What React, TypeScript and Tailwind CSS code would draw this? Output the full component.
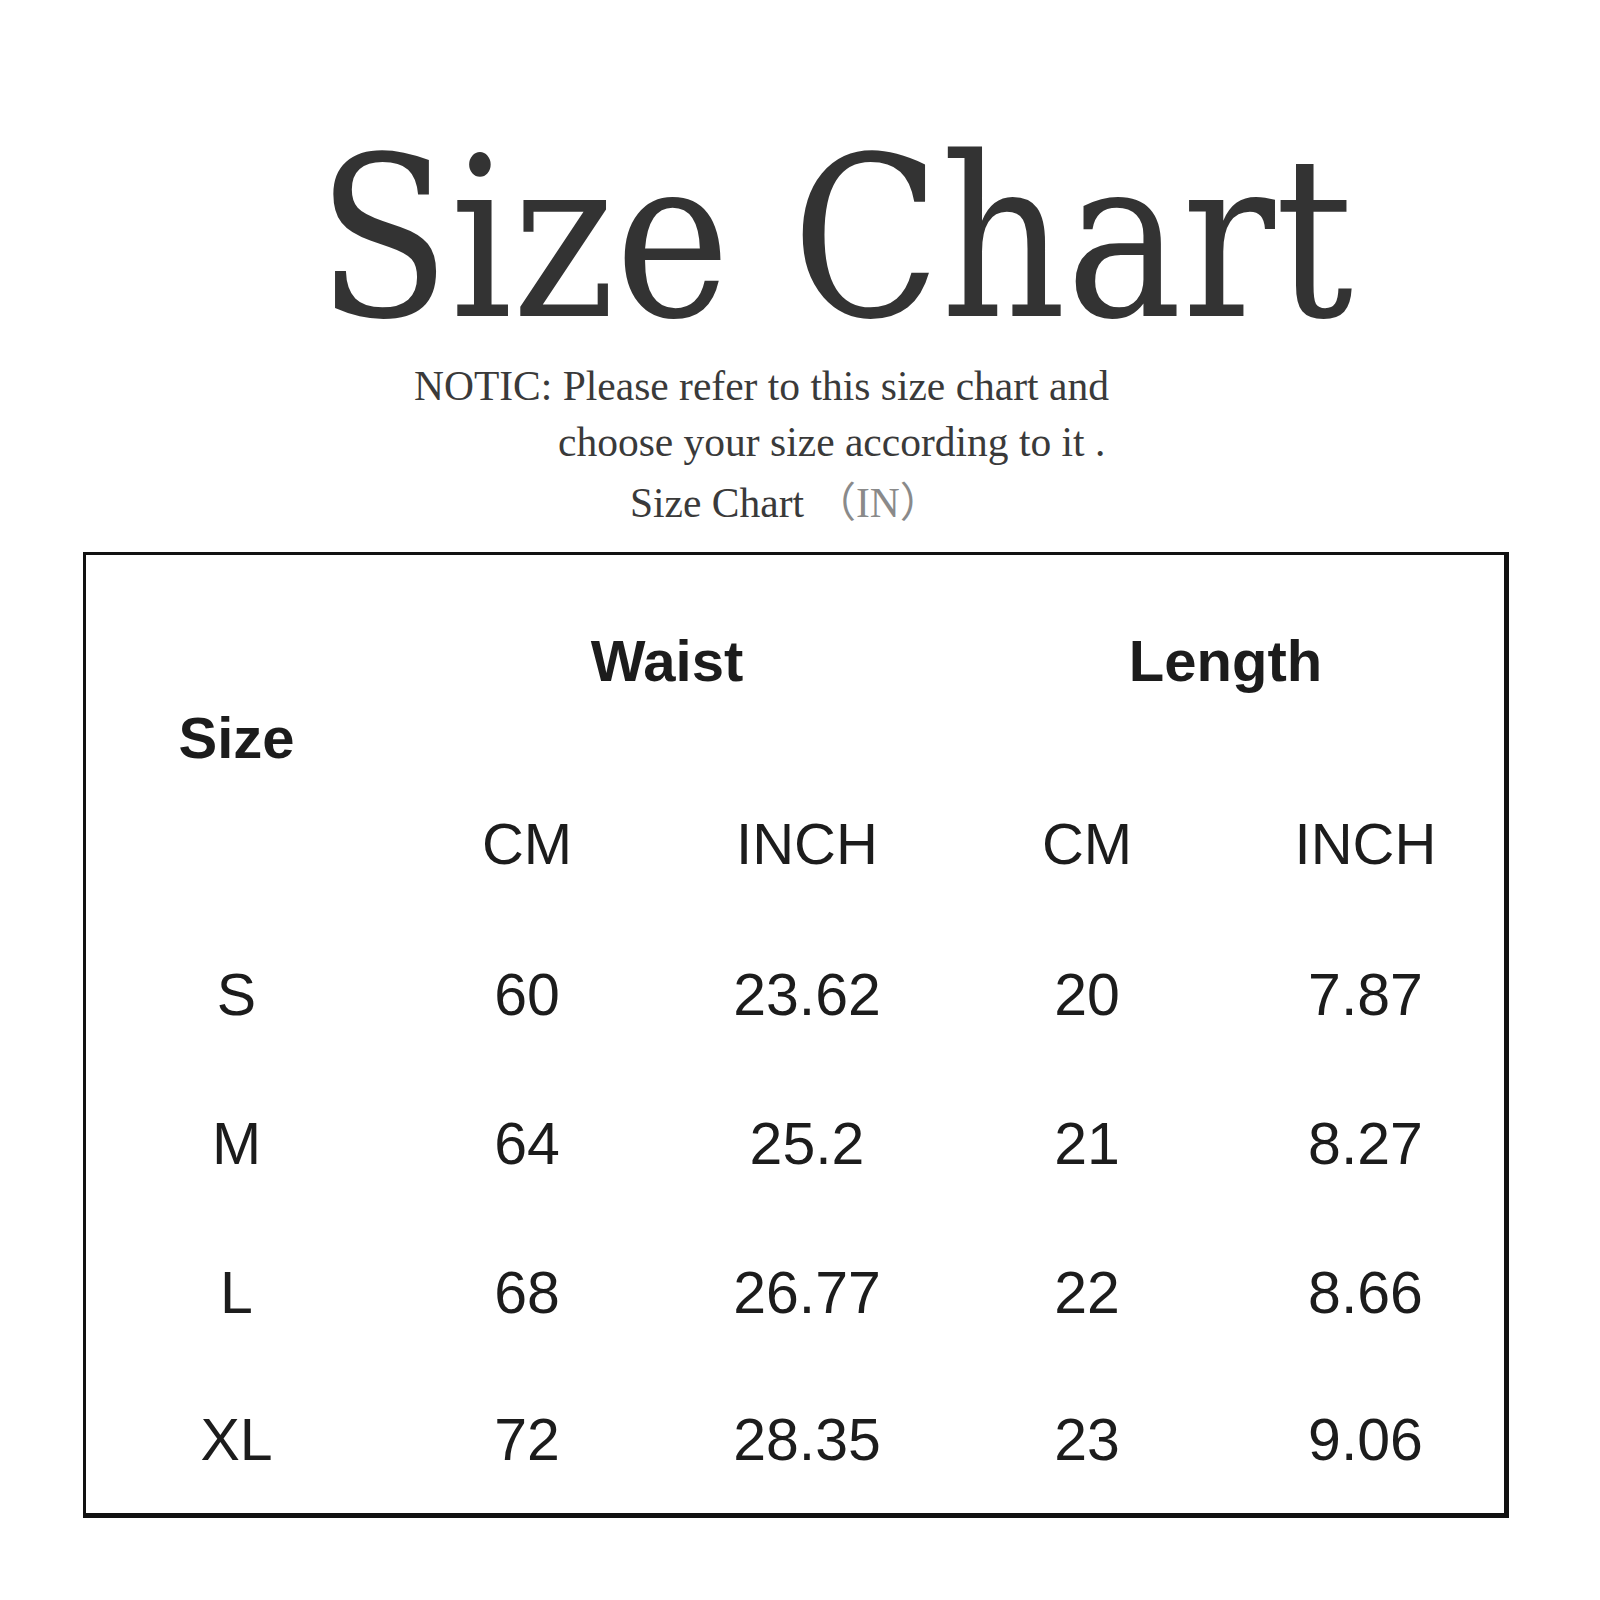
import * as React from "react";

interface SizeRow {
  size: string;
  waistCm: string;
  waistIn: string;
  lengthCm: string;
  lengthIn: string;
}

const rows: SizeRow[] = [
  { size: "S", waistCm: "60", waistIn: "23.62", lengthCm: "20", lengthIn: "7.87" },
  { size: "M", waistCm: "64", waistIn: "25.2", lengthCm: "21", lengthIn: "8.27" },
  { size: "L", waistCm: "68", waistIn: "26.77", lengthCm: "22", lengthIn: "8.66" },
  { size: "XL", waistCm: "72", waistIn: "28.35", lengthCm: "23", lengthIn: "9.06" }
];

const cell = "flex items-center justify-center leading-none";

export default function App() {
  return (
    <div className="w-[1600px] h-[1600px] bg-white overflow-hidden">
      {/* Title */}
      <div className="pt-[128px] pl-[317px] h-[350px]">
        <h1 className="inline-block origin-left scale-x-[0.974] text-[222px] leading-none text-[#333333] whitespace-nowrap [font-family:'DejaVu_Serif_Condensed','DejaVu_Serif',serif]">
          Size Chart
        </h1>
      </div>

      {/* Notice */}
      <div className="flex flex-col text-[41.5px] leading-none text-[#3a3a3a] whitespace-nowrap [font-family:'Liberation_Serif','Noto_Sans_CJK_SC',serif]">
        <p className="mt-[16px] ml-[414px] h-[41px]">NOTIC: Please refer to this size chart and</p>
        <p className="mt-[15px] ml-[558px] h-[41px]">choose your size according to it .</p>
        <p className="mt-[20px] ml-[630px] h-[41px]">
          Size Chart <span className="text-[#8a8a8a]">（IN）</span>
        </p>
      </div>

      {/* Table */}
      <div className="mt-[28px] ml-[83px] w-[1426px] h-[966px] border-l-[3px] border-t-[3px] border-r-[5px] border-b-[5px] border-[#111111] bg-white">
        <div className="grid h-full grid-cols-[301px_280px_280px_280px_1fr] grid-rows-[212px_154px_149px_149px_149px_1fr] text-[#1c1c1c] [font-family:'Liberation_Sans',Arial,sans-serif]">
          <div className={`${cell} row-span-2 text-[58px] font-bold`}>Size</div>
          <div className={`${cell} col-span-2 text-[58px] font-bold`}>Waist</div>
          <div className={`${cell} col-span-2 text-[58px] font-bold`}>Length</div>

          <div className={`${cell} text-[58px]`}>CM</div>
          <div className={`${cell} text-[58px]`}>INCH</div>
          <div className={`${cell} text-[58px]`}>CM</div>
          <div className={`${cell} text-[58px]`}>INCH</div>

          {rows.map((r) => (
            <React.Fragment key={r.size}>
              <div className={`${cell} text-[59px]`}>{r.size}</div>
              <div className={`${cell} text-[59px]`}>{r.waistCm}</div>
              <div className={`${cell} text-[59px]`}>{r.waistIn}</div>
              <div className={`${cell} text-[59px]`}>{r.lengthCm}</div>
              <div className={`${cell} text-[59px]`}>{r.lengthIn}</div>
            </React.Fragment>
          ))}
        </div>
      </div>
    </div>
  );
}
